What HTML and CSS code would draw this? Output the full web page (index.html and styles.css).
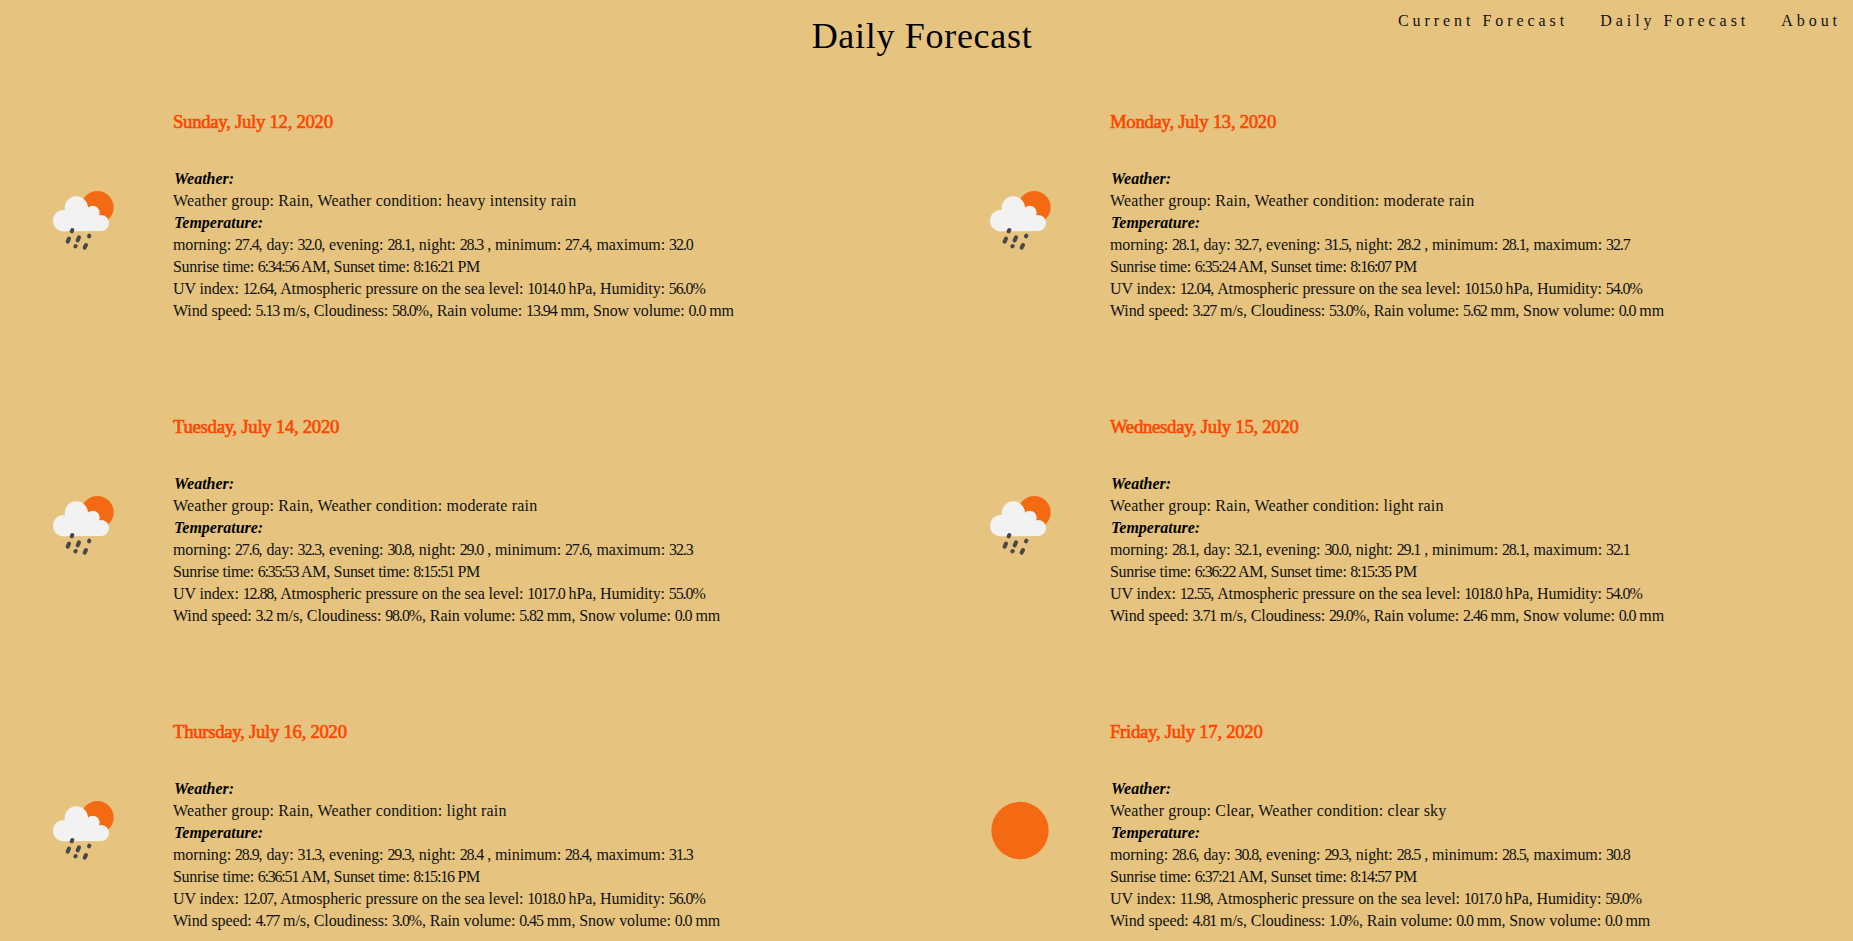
FILE: index.html
```html
<!DOCTYPE html>
<html lang="en">
<head>
<meta charset="utf-8">
<title>Daily Forecast</title>
<link rel="stylesheet" href="styles.css">
</head>
<body>
<svg class="defs" aria-hidden="true">
  <symbol id="rain" viewBox="0 0 270 270">
    <circle cx="172" cy="112" r="49" fill="#f36a12"/>
    <g fill="#f2f2f2"><circle cx="71" cy="152" r="32"/><circle cx="109" cy="114" r="35"/><circle cx="158" cy="128" r="21"/><circle cx="183" cy="159" r="24"/><path d="M71 184V140L109 110L158 125L183 150V183Z"/></g>
    <g stroke="#48484a" stroke-width="12" stroke-linecap="round"><path d="M95 184l2-4M83 215l4-9M113 211l4-9M147 199l1-2M106 229l1-1M134 233l4-8"/></g>
  </symbol>
  <symbol id="sun" viewBox="0 0 270 270"><circle cx="129" cy="151.5" r="86" fill="#f36a12"/></symbol>
</svg>
<header class="header">
  <h1 class="title">Daily Forecast</h1>
  <nav class="nav"><a>Current Forecast</a><a>Daily Forecast</a><a>About</a></nav>
</header>
<main class="grid" id="forecast"></main>
<script src="forecast.js"></script>
</body>
</html>
```
FILE: forecast.js
```js
// date, group, condition, [morning, day, evening, night, min, max], sunrise, sunset, [uv, pressure, humidity], [wind, clouds, rain]
const days = [
  ["Sunday, July 12, 2020", "Rain", "heavy intensity rain", ["27.4", "32.0", "28.1", "28.3", "27.4", "32.0"], "6:34:56", "8:16:21", ["12.64", "1014.0", "56.0"], ["5.13", "58.0", "13.94"]],
  ["Monday, July 13, 2020", "Rain", "moderate rain", ["28.1", "32.7", "31.5", "28.2", "28.1", "32.7"], "6:35:24", "8:16:07", ["12.04", "1015.0", "54.0"], ["3.27", "53.0", "5.62"]],
  ["Tuesday, July 14, 2020", "Rain", "moderate rain", ["27.6", "32.3", "30.8", "29.0", "27.6", "32.3"], "6:35:53", "8:15:51", ["12.88", "1017.0", "55.0"], ["3.2", "98.0", "5.82"]],
  ["Wednesday, July 15, 2020", "Rain", "light rain", ["28.1", "32.1", "30.0", "29.1", "28.1", "32.1"], "6:36:22", "8:15:35", ["12.55", "1018.0", "54.0"], ["3.71", "29.0", "2.46"]],
  ["Thursday, July 16, 2020", "Rain", "light rain", ["28.9", "31.3", "29.3", "28.4", "28.4", "31.3"], "6:36:51", "8:15:16", ["12.07", "1018.0", "56.0"], ["4.77", "3.0", "0.45"]],
  ["Friday, July 17, 2020", "Clear", "clear sky", ["28.6", "30.8", "29.3", "28.5", "28.5", "30.8"], "6:37:21", "8:14:57", ["11.98", "1017.0", "59.0"], ["4.81", "1.0", "0.0"]]
];

const tighten = text => text.replace(/\d[\d.:]*/g, n => `<span class="${n.includes(":") ? "clock" : "num"}">${n}</span>`);
const line = (name, text) => `<p class="${name}">${tighten(text)}</p>`;

document.getElementById("forecast").innerHTML = days.map(([date, group, condition, t, rise, set, a, w]) => `
  <article class="card">
    <svg class="icon"><use href="#${group === "Clear" ? "sun" : "rain"}"/></svg>
    <div class="details">
      <h2>${date}</h2>
      <h3>Weather:</h3>
      ${line("group", `Weather group: ${group}, Weather condition: ${condition}`)}
      <h3>Temperature:</h3>
      ${line("temp", `morning: ${t[0]}, day: ${t[1]}, evening: ${t[2]}, night: ${t[3]} , minimum: ${t[4]}, maximum: ${t[5]}`)}
      ${line("time", `Sunrise time: ${rise} AM, Sunset time: ${set} PM`)}
      ${line("air", `UV index: ${a[0]}, Atmospheric pressure on the sea level: ${a[1]} hPa, Humidity: ${a[2]}%`)}
      ${line("wind", `Wind speed: ${w[0]} m/s, Cloudiness: ${w[1]}%, Rain volume: ${w[2]} mm, Snow volume: 0.0 mm`)}
    </div>
  </article>`).join("");
```
FILE: styles.css
```css
* { box-sizing: border-box; margin: 0; padding: 0; }
html { height: 941px; overflow: hidden; }
body { height: 941px; overflow: hidden; background: #e6c47f; color: #111; font: 16px/22px "Liberation Serif", serif; }
.defs { display: none; }
.header { display: grid; grid-template-columns: 1fr auto 1fr; height: 100px; padding: 0 12px 0 3px; }
.title { grid-column: 2; padding-top: 14px; color: #000; font-size: 36px; font-weight: 400; line-height: 44px; letter-spacing: 0.7px; white-space: nowrap; }
.nav { display: flex; justify-content: flex-end; gap: 32px; padding-top: 10px; font-size: 16px; letter-spacing: 3.95px; white-space: nowrap; }
.grid { display: grid; grid-template-columns: 937px 1fr; grid-template-rows: 305px 305px 231px; height: 841px; overflow: hidden; }
.card { display: flex; padding-left: 40px; }
.icon { flex: none; width: 90px; height: 90px; margin: 70px 43px 0 0; }
.details { white-space: nowrap; padding-top: 11px; }
h2 { margin-bottom: 35px; color: #ff4500; font-size: 18.7px; font-weight: 400; line-height: 22px; letter-spacing: -0.27px; -webkit-text-stroke: 0.6px #ff4500; }
h3 { padding-left: 1px; color: #000; font-size: 16px; font-style: italic; line-height: 22px; }
.group { letter-spacing: 0.18px; }
.temp { letter-spacing: -0.08px; }
.air { letter-spacing: -0.11px; }
.time { letter-spacing: -0.3px; }
.wind { letter-spacing: -0.1px; }
.num { letter-spacing: -1.1px; }
.clock { letter-spacing: -1.2px; }
```
